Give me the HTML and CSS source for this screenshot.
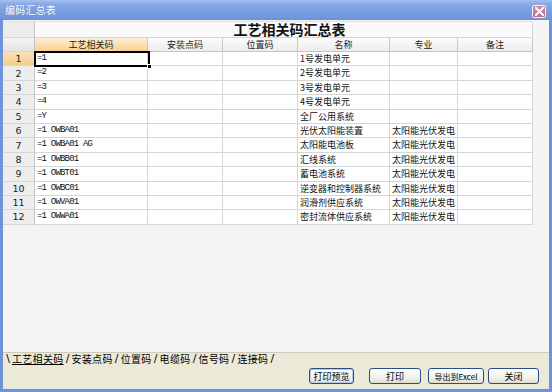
FILE: index.html
```html
<!DOCTYPE html>
<html lang="zh-CN">
<head>
<meta charset="utf-8">
<title>编码汇总表</title>
<link rel="stylesheet" href="styles.css">
</head>
<body>
<div class="window">
  <div class="titlebar">
    <span class="title">编码汇总表</span>
    <span class="close"><svg width="9" height="9" viewBox="0 0 9 9"><path d="M1 1 L8 8 M8 1 L1 8" stroke="#fff" stroke-width="2" stroke-linecap="square"/></svg></span>
  </div>
  <div class="sheet">
    <div class="grid">
      <div class="rh corner"></div>
      <div class="caption">工艺相关码汇总表</div>

      <div class="rh corner hd"></div>
      <div class="ch active">工艺相关码</div>
      <div class="ch">安装点码</div>
      <div class="ch">位置码</div>
      <div class="ch">名称</div>
      <div class="ch">专业</div>
      <div class="ch">备注</div>

      <div class="rh sel">1</div><div class="c code">=1</div><div class="c"></div><div class="c"></div><div class="c">1号发电单元</div><div class="c"></div><div class="c"></div>
      <div class="rh">2</div><div class="c code">=2</div><div class="c"></div><div class="c"></div><div class="c">2号发电单元</div><div class="c"></div><div class="c"></div>
      <div class="rh">3</div><div class="c code">=3</div><div class="c"></div><div class="c"></div><div class="c">3号发电单元</div><div class="c"></div><div class="c"></div>
      <div class="rh">4</div><div class="c code">=4</div><div class="c"></div><div class="c"></div><div class="c">4号发电单元</div><div class="c"></div><div class="c"></div>
      <div class="rh">5</div><div class="c code">=Y</div><div class="c"></div><div class="c"></div><div class="c">全厂公用系统</div><div class="c"></div><div class="c"></div>
      <div class="rh">6</div><div class="c code">=1 OWBA01</div><div class="c"></div><div class="c"></div><div class="c">光伏太阳能装置</div><div class="c">太阳能光伏发电</div><div class="c"></div>
      <div class="rh">7</div><div class="c code">=1 OWBA01 AG</div><div class="c"></div><div class="c"></div><div class="c">太阳能电池板</div><div class="c">太阳能光伏发电</div><div class="c"></div>
      <div class="rh">8</div><div class="c code">=1 OWBB01</div><div class="c"></div><div class="c"></div><div class="c">汇线系统</div><div class="c">太阳能光伏发电</div><div class="c"></div>
      <div class="rh">9</div><div class="c code">=1 OWBT01</div><div class="c"></div><div class="c"></div><div class="c">蓄电池系统</div><div class="c">太阳能光伏发电</div><div class="c"></div>
      <div class="rh">10</div><div class="c code">=1 OWBC01</div><div class="c"></div><div class="c"></div><div class="c">逆变器和控制器系统</div><div class="c">太阳能光伏发电</div><div class="c"></div>
      <div class="rh">11</div><div class="c code">=1 OWVA01</div><div class="c"></div><div class="c"></div><div class="c">润滑剂供应系统</div><div class="c">太阳能光伏发电</div><div class="c"></div>
      <div class="rh">12</div><div class="c code">=1 OWWA01</div><div class="c"></div><div class="c"></div><div class="c">密封流体供应系统</div><div class="c">太阳能光伏发电</div><div class="c"></div>

      <div class="cursor"><span class="handle"></span></div>
    </div>
  </div>
  <div class="tabs">
    <span class="sl">\</span><span class="tab on">工艺相关码</span><span class="sl">/</span><span class="tab">安装点码</span><span class="sl">/</span><span class="tab">位置码</span><span class="sl">/</span><span class="tab">电缆码</span><span class="sl">/</span><span class="tab">信号码</span><span class="sl">/</span><span class="tab">连接码</span><span class="sl">/</span>
  </div>
  <div class="footer">
    <button class="btn b1 def">打印预览</button>
    <button class="btn b2">打印</button>
    <button class="btn b3">导出到Excel</button>
    <button class="btn b4">关闭</button>
  </div>
</div>
</body>
</html>
```

FILE: styles.css
```css
* { box-sizing: border-box; }
html, body { margin: 0; padding: 0; }
body {
  width: 552px;
  height: 392px;
  overflow: hidden;
  font-family: "Noto Sans CJK SC", "DejaVu Sans", sans-serif;
  background: #ffffff;
}
.window {
  width: 552px;
  height: 392px;
  display: flex;
  flex-direction: column;
  border-left: 3px solid #6f93d8;
  border-right: 3px solid #6f93d8;
  border-bottom: 3px solid #6f93d8;
  background: #ece9d8;
}
.titlebar {
  flex: none;
  height: 20px;
  margin: 0 -3px;
  padding: 0 6px 0 5px;
  display: flex;
  align-items: center;
  justify-content: space-between;
  background: linear-gradient(#a7c1ef 0%, #86a8e6 20%, #7a9fe0 55%, #7399dc 85%, #6b90d4 100%);
}
.title {
  color: #ffffff;
  font-size: 10px;
  line-height: 12px;
  letter-spacing: 0.2px;
  text-shadow: 0 0 1px #5a7cc0;
}
.close {
  width: 14px;
  height: 13px;
  margin-top: 2px;
  display: flex;
  align-items: center;
  justify-content: center;
  border: 1px solid #eef2fb;
  border-radius: 2px;
  background: linear-gradient(#d78da6, #c2688a);
}
.sheet {
  flex: 1 1 auto;
  min-height: 0;
  background: #f4f4f4;
  padding-top: 1px;
}
.grid {
  position: relative;
  display: grid;
  grid-template-columns: 32px 113px 75px 75px 92px 68px 75px;
  grid-template-rows: 16px 14px repeat(12, 14.4px);
  width: 530px;
  background: #ffffff;
  border-top: 1px solid #e2e2e2;
}
.grid > div {
  border-right: 1px solid #d6d6d6;
  border-bottom: 1px solid #d6d6d6;
  overflow: hidden;
  white-space: nowrap;
}
.rh {
  background: #ededed;
  color: #222;
  font-size: 9.5px;
  display: flex;
  align-items: center;
  justify-content: center;
  font-family: "DejaVu Sans", sans-serif;
  border-right-color: #c5c5c5 !important;
}
.rh.corner { background: #ececec; }
.rh.hd { background: linear-gradient(#f4f4f4, #e3e3e3); }
.rh.sel { background: linear-gradient(#f9e0b3, #f5cf8c); }
.grid > .caption {
  grid-column: 2 / 8;
  text-align: center;
  font-size: 14px;
  font-weight: bold;
  line-height: 15px;
  padding-left: 12px;
  color: #111;
  background: #fafafa;
  overflow: visible;
}
.ch {
  background: linear-gradient(#fdfdfd, #ececec);
  color: #222;
  font-size: 9px;
  line-height: 13px;
  text-align: center;
  border-right-color: #c8c8c8 !important;
  border-bottom-color: #c4c4c4 !important;
}
.ch.active { background: linear-gradient(#fdf0d6, #f8d090); }
.c {
  font-size: 9px;
  line-height: 13.4px;
  padding-left: 2px;
  color: #111;
}
.c.code {
  font-family: "Liberation Mono", monospace;
  font-size: 9px;
  letter-spacing: -0.8px;
  padding-left: 2px;
}
.grid > .cursor {
  position: absolute;
  left: 31px;
  top: 29px;
  width: 116px;
  height: 16.4px;
  border: 2px solid #000;
  overflow: visible;
  pointer-events: none;
}
.handle {
  position: absolute;
  right: -4px;
  bottom: -4px;
  width: 5px;
  height: 5px;
  background: #000;
  border: 1px solid #fff;
}
.tabs {
  flex: none;
  height: 13px;
  display: flex;
  align-items: center;
  padding-left: 1px;
  border-top: 1px solid #cfcbbb;
  font-size: 10px;
  line-height: 12px;
  color: #000;
}
.tab { letter-spacing: 0.3px; }
.tab.on { text-decoration: underline; text-underline-offset: 1px; }
.sl {
  display: inline-block;
  width: 8px;
  text-align: center;
  font-family: "DejaVu Sans", sans-serif;
  font-size: 11px;
}
.footer {
  flex: none;
  height: 24px;
  display: flex;
  align-items: flex-start;
  padding-top: 3px;
  padding-left: 306px;
}
.btn {
  height: 16px;
  padding: 0;
  font-family: "Noto Sans CJK SC", sans-serif;
  font-size: 9px;
  line-height: 13px;
  color: #000;
  border: 1px solid #2a4f86;
  border-radius: 3px;
  background: linear-gradient(#ffffff, #f3f2ec 60%, #e0ddd0);
}
.btn.def { box-shadow: inset 0 0 0 1px #b7c7e6; }
.b1 { width: 45px; }
.b2 { width: 52px; margin-left: 15px; }
.b3 { width: 56px; margin-left: 7px; font-size: 8px; }
.b4 { width: 51px; margin-left: 4px; }
```
